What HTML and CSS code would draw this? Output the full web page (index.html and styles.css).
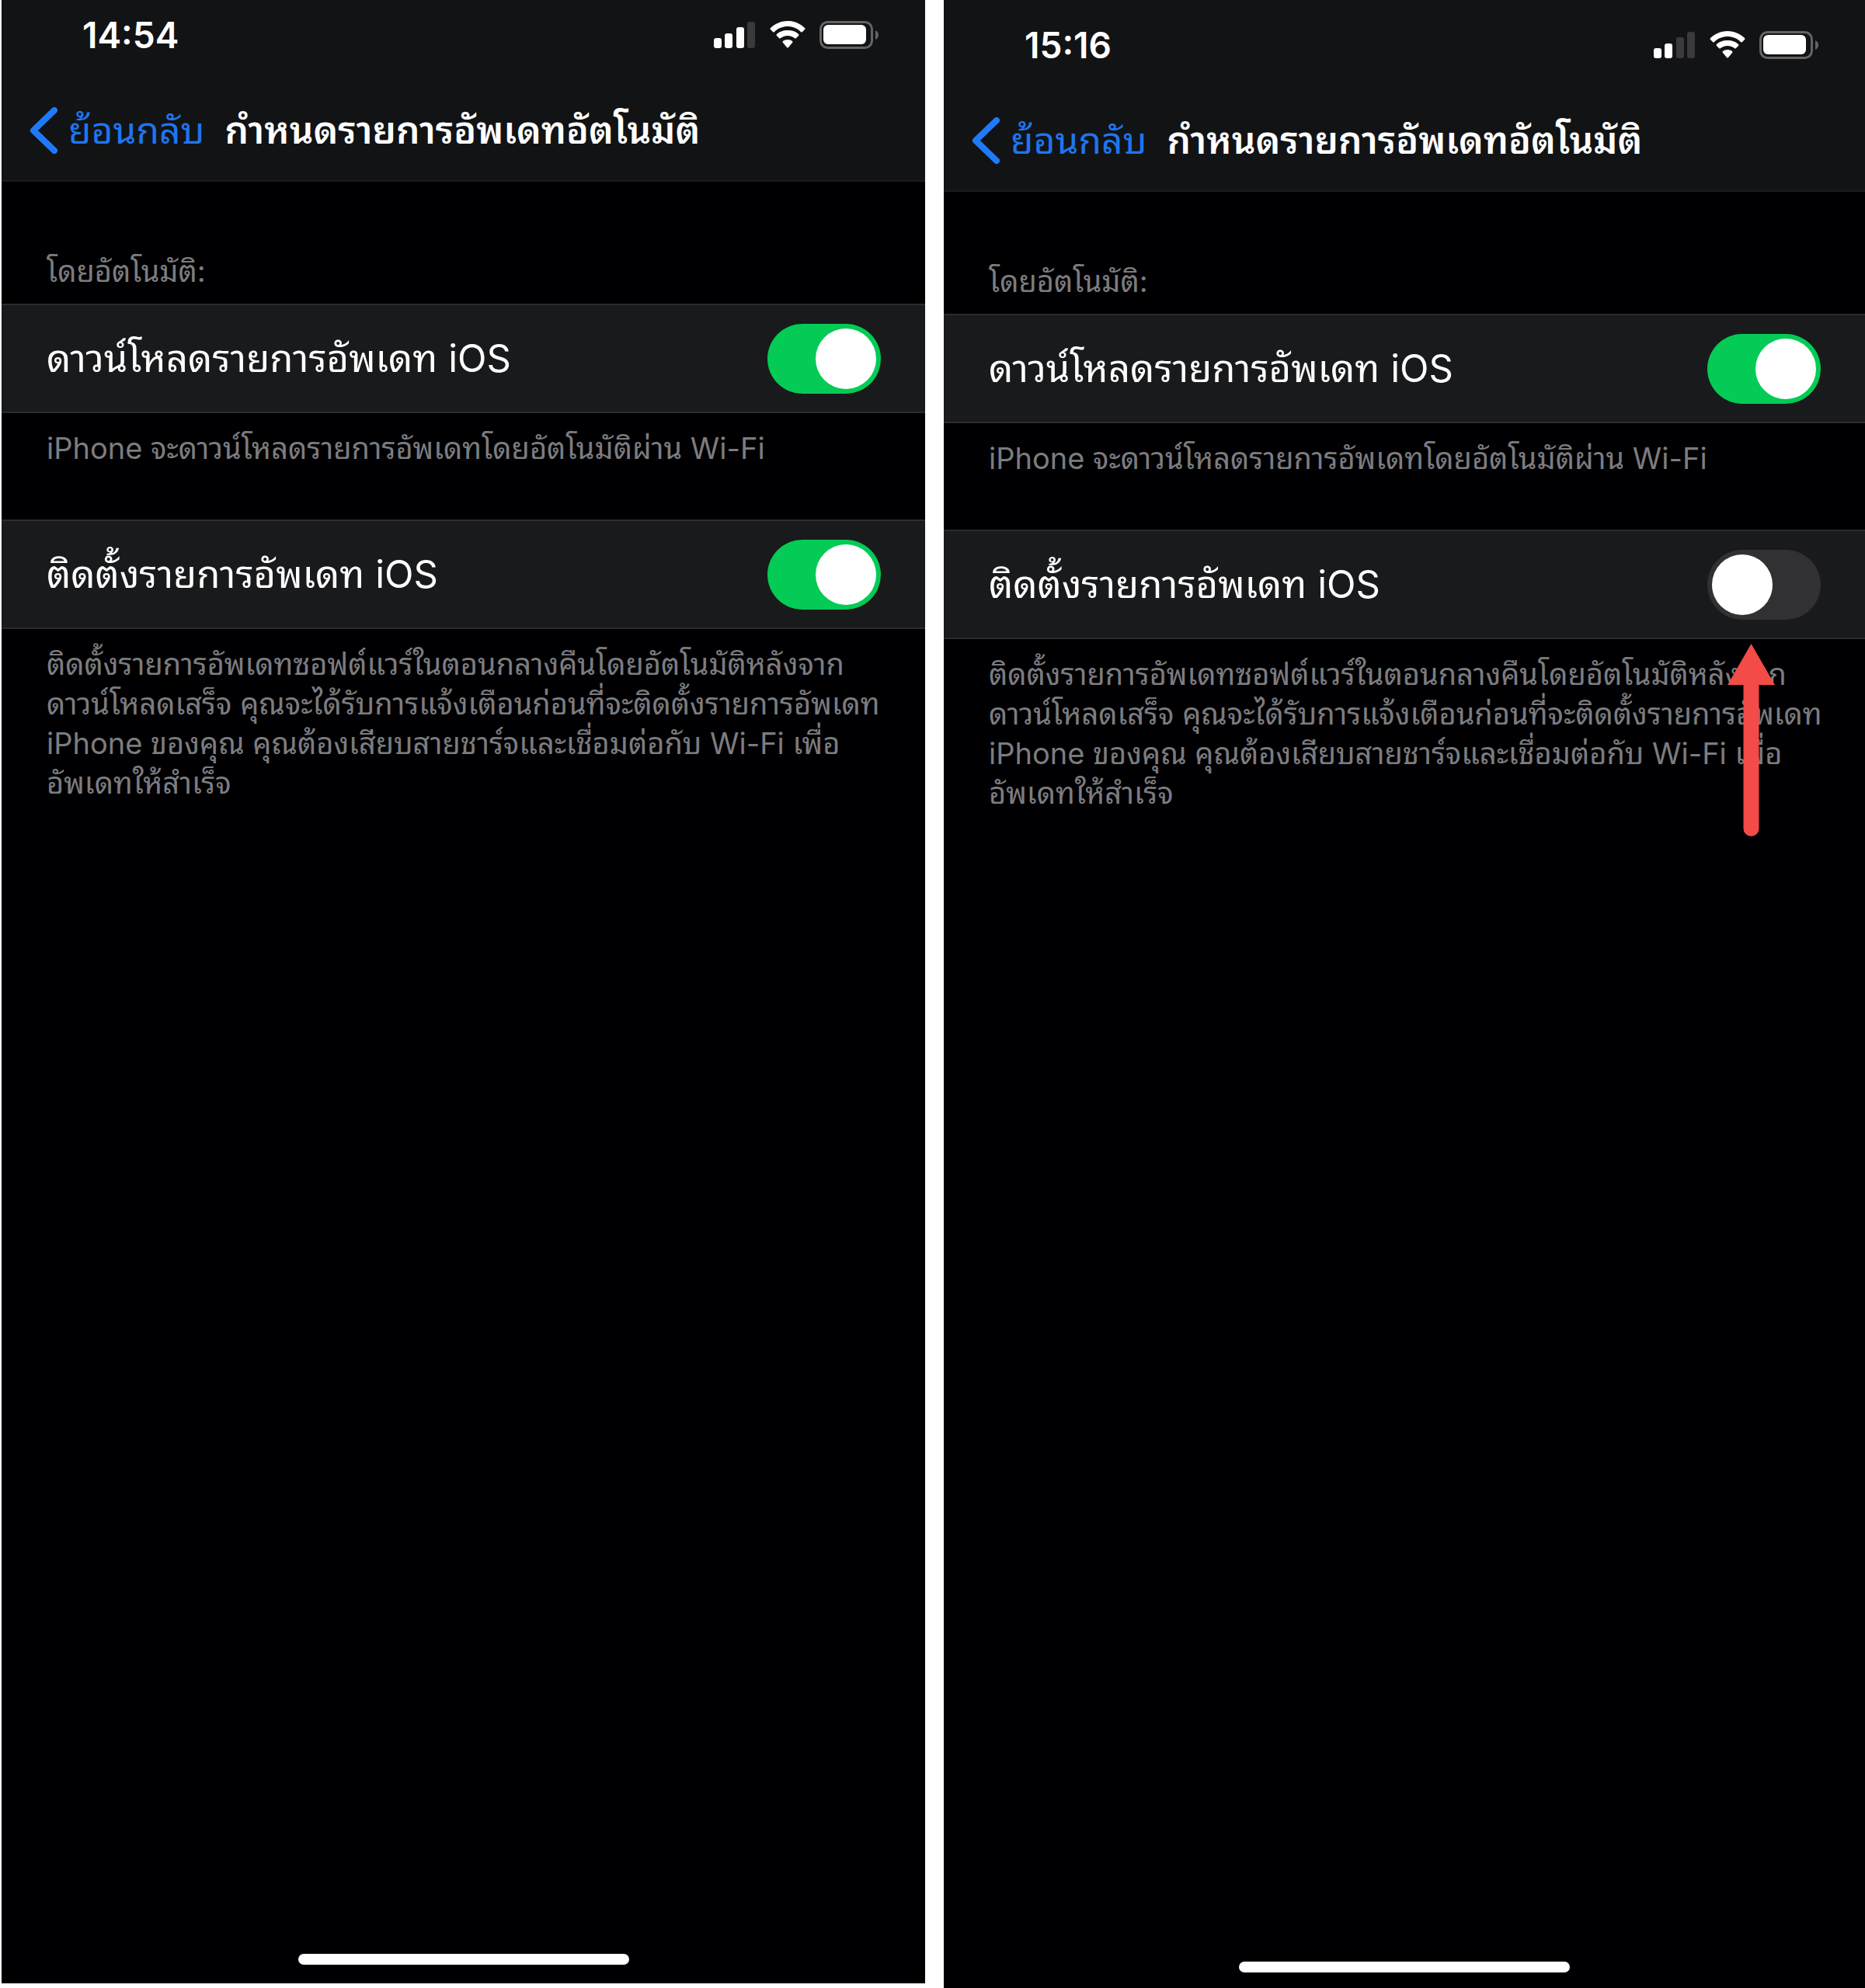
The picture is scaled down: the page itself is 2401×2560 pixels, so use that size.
FILE: index.html
```
<!DOCTYPE html>
<html lang="th">
<head>
  <meta charset="UTF-8">
  <meta name="viewport" content="width=device-width, initial-scale=1.0">
  <title>กำหนดรายการอัพเดทอัตโนมัติ</title>
  <link rel="stylesheet" href="styles.css">
</head>
<body>

  <div class="screens">

    <!-- Both options on -->
    <section class="phone phone-before">
      <header class="top-bar">
        <div class="status-bar">
          <time class="clock">14:54</time>
          <div class="status-icons">
            <svg class="signal" viewBox="0 0 54 36" aria-hidden="true">
              <rect x="0" y="22" width="10" height="13" rx="3"/>
              <rect x="14" y="16" width="10" height="19" rx="3"/>
              <rect x="29" y="8" width="10" height="27" rx="3"/>
              <rect class="dim" x="43" y="1" width="10" height="34" rx="3"/>
            </svg>
            <svg class="wifi" viewBox="0 0 46 36" aria-hidden="true">
              <path d="M23 0C14 0 6 4 1 9Q0 10 1 11L4 14Q5 15 6 14C11 9 17 7 23 7S35 9 40 14Q41 15 42 14L45 11Q46 10 45 9C40 4 32 0 23 0Z"/>
              <path d="M23 12C17 12 12 14 9 17Q8 18 9 19L12 22Q13 23 14 22C17 20 20 19 23 19S29 20 32 22Q33 23 34 22L37 19Q38 18 37 17C34 14 29 12 23 12Z"/>
              <path d="M23 24C20 24 18 25 17 26Q16 27 17 28L22 34Q23 35 24 34L29 28Q30 27 29 26C28 25 26 24 23 24Z"/>
            </svg>
            <svg class="battery" viewBox="0 0 76 36" aria-hidden="true">
              <rect class="case" x="1.5" y="1.5" width="66" height="33" rx="9"/>
              <rect x="5" y="5" width="55" height="25" rx="6"/>
              <path class="cap" d="M72 12Q76 14 76 18T72 24Z"/>
            </svg>
          </div>
        </div>
        <nav class="nav-bar">
          <a class="back" href="#">
            <svg class="chevron" viewBox="0 0 36 60" aria-hidden="true"><path d="M32 4L5 30L32 56"/></svg>
            ย้อนกลับ
          </a>
          <h1>กำหนดรายการอัพเดทอัตโนมัติ</h1>
        </nav>
      </header>

      <main class="settings">
        <h2>โดยอัตโนมัติ:</h2>
        <div class="row">
          <label for="download-1">ดาวน์โหลดรายการอัพเดท iOS</label>
          <input class="switch" type="checkbox" id="download-1" checked>
        </div>
        <p class="note">iPhone จะดาวน์โหลดรายการอัพเดทโดยอัตโนมัติผ่าน Wi-Fi</p>
        <div class="row">
          <label for="install-1">ติดตั้งรายการอัพเดท iOS</label>
          <input class="switch" type="checkbox" id="install-1" checked>
        </div>
        <p class="note">ติดตั้งรายการอัพเดทซอฟต์แวร์ในตอนกลางคืนโดยอัตโนมัติหลังจาก<br>ดาวน์โหลดเสร็จ คุณจะได้รับการแจ้งเตือนก่อนที่จะติดตั้งรายการอัพเดท<br>iPhone ของคุณ คุณต้องเสียบสายชาร์จและเชื่อมต่อกับ Wi-Fi เพื่อ<br>อัพเดทให้สำเร็จ</p>
      </main>

      <div class="home-indicator"></div>
    </section>

    <!-- Install option off -->
    <section class="phone phone-after">
      <header class="top-bar">
        <div class="status-bar">
          <time class="clock">15:16</time>
          <div class="status-icons">
            <svg class="signal" viewBox="0 0 54 36" aria-hidden="true">
              <rect x="0" y="22" width="10" height="13" rx="3"/>
              <rect x="14" y="16" width="10" height="19" rx="3"/>
              <rect class="dim" x="29" y="8" width="10" height="27" rx="3"/>
              <rect class="dim" x="43" y="1" width="10" height="34" rx="3"/>
            </svg>
            <svg class="wifi" viewBox="0 0 46 36" aria-hidden="true">
              <path d="M23 0C14 0 6 4 1 9Q0 10 1 11L4 14Q5 15 6 14C11 9 17 7 23 7S35 9 40 14Q41 15 42 14L45 11Q46 10 45 9C40 4 32 0 23 0Z"/>
              <path d="M23 12C17 12 12 14 9 17Q8 18 9 19L12 22Q13 23 14 22C17 20 20 19 23 19S29 20 32 22Q33 23 34 22L37 19Q38 18 37 17C34 14 29 12 23 12Z"/>
              <path d="M23 24C20 24 18 25 17 26Q16 27 17 28L22 34Q23 35 24 34L29 28Q30 27 29 26C28 25 26 24 23 24Z"/>
            </svg>
            <svg class="battery" viewBox="0 0 76 36" aria-hidden="true">
              <rect class="case" x="1.5" y="1.5" width="66" height="33" rx="9"/>
              <rect x="5" y="5" width="55" height="25" rx="6"/>
              <path class="cap" d="M72 12Q76 14 76 18T72 24Z"/>
            </svg>
          </div>
        </div>
        <nav class="nav-bar">
          <a class="back" href="#">
            <svg class="chevron" viewBox="0 0 36 60" aria-hidden="true"><path d="M32 4L5 30L32 56"/></svg>
            ย้อนกลับ
          </a>
          <h1>กำหนดรายการอัพเดทอัตโนมัติ</h1>
        </nav>
      </header>

      <main class="settings">
        <h2>โดยอัตโนมัติ:</h2>
        <div class="row">
          <label for="download-2">ดาวน์โหลดรายการอัพเดท iOS</label>
          <input class="switch" type="checkbox" id="download-2" checked>
        </div>
        <p class="note">iPhone จะดาวน์โหลดรายการอัพเดทโดยอัตโนมัติผ่าน Wi-Fi</p>
        <div class="row">
          <label for="install-2">ติดตั้งรายการอัพเดท iOS</label>
          <input class="switch" type="checkbox" id="install-2">
          <svg class="arrow" viewBox="0 0 61 248" aria-hidden="true">
            <path d="M30.5 0L61 53H40.5V238A10 10 0 0 1 20.5 238V53H0Z"/>
          </svg>
        </div>
        <p class="note">ติดตั้งรายการอัพเดทซอฟต์แวร์ในตอนกลางคืนโดยอัตโนมัติหลังจาก<br>ดาวน์โหลดเสร็จ คุณจะได้รับการแจ้งเตือนก่อนที่จะติดตั้งรายการอัพเดท<br>iPhone ของคุณ คุณต้องเสียบสายชาร์จและเชื่อมต่อกับ Wi-Fi เพื่อ<br>อัพเดทให้สำเร็จ</p>
      </main>

      <div class="home-indicator"></div>
    </section>

  </div>

</body>
</html>
```
FILE: styles.css
```
* {
  box-sizing: border-box;
}

body {
  margin: 0;
  background-color: #ffffff;
  color: #ffffff;
  font-family: Inter, "Noto Sans Thai Looped", "Noto Looped Thai", Loma, Waree, Garuda, "Noto Sans Thai", "Noto Sans", sans-serif;
}

.screens {
  display: grid;
  grid-template-columns: 1189fr 1186fr;
  gap: 24px;
  min-height: 100vh;
  padding-left: 2px;
}

.phone {
  display: flex;
  flex-direction: column;
  background-color: #000002;
}

.phone-before {
  margin-bottom: 6px;
}

.top-bar {
  background-color: #121315;
  border-bottom: 2px solid #1c1d1f;
}

.phone-after .top-bar {
  padding-top: 13px;
}

.status-bar {
  display: flex;
  justify-content: space-between;
  align-items: center;
  height: 90px;
  padding: 0 60px 0 104px;
}

.clock {
  font-size: 46px;
  font-weight: 600;
}

.status-icons {
  display: flex;
  align-items: center;
  gap: 18px;
}

.status-icons svg {
  height: 36px;
  fill: #ffffff;
}

.signal {
  width: 54px;
}

.wifi {
  width: 46px;
}

.battery {
  width: 76px;
}

.signal .dim {
  fill: #3a3a3c;
}

.battery .case {
  fill: none;
  stroke: #636466;
  stroke-width: 3;
}

.battery .cap {
  fill: #636466;
}

.nav-bar {
  display: flex;
  align-items: center;
  gap: 26px;
  height: 142px;
  padding: 14px 36px 0;
}

.back {
  display: flex;
  align-items: center;
  gap: 14px;
  color: #1f75ee;
  font-size: 48px;
  line-height: 60px;
  text-decoration: none;
  white-space: nowrap;
}

.chevron {
  width: 36px;
  height: 60px;
  fill: none;
  stroke: #1f7afa;
  stroke-width: 8;
  stroke-linecap: round;
  stroke-linejoin: round;
}

h1 {
  margin: 0;
  font-size: 48px;
  font-weight: 600;
  line-height: 60px;
  white-space: nowrap;
}

h2 {
  margin: 0;
  padding: 90px 58px 16px;
  color: #7c7c80;
  font-size: 38px;
  font-weight: 400;
  line-height: 51px;
}

.row {
  position: relative;
  display: flex;
  justify-content: space-between;
  align-items: center;
  height: 141px;
  padding: 0 57px 0 58px;
  background-color: #191a1c;
  border-top: 2px solid #2a2b2d;
  border-bottom: 2px solid #2a2b2d;
}

.row label {
  font-size: 49px;
  line-height: 60px;
}

.switch {
  appearance: none;
  width: 146px;
  height: 90px;
  margin: 0;
  padding: 6px;
  border-radius: 45px;
  background-color: #313134;
  cursor: pointer;
}

.switch::before {
  content: "";
  display: block;
  width: 78px;
  height: 78px;
  border-radius: 50%;
  background-color: #ffffff;
}

.switch:checked {
  background-color: #04cb55;
}

.switch:checked::before {
  margin-left: auto;
}

.note {
  margin: 0;
  padding: 20px 40px 66px 58px;
  color: #7c7c80;
  font-size: 38px;
  line-height: 51px;
  white-space: nowrap;
}

/* Points at the switch that was turned off */
.arrow {
  position: absolute;
  top: 145px;
  right: 116px;
  width: 61px;
  height: 248px;
  fill: #f24b48;
}

.home-indicator {
  width: 426px;
  height: 14px;
  margin: auto auto 24px;
  border-radius: 7px;
  background-color: #ffffff;
}

.phone-after .home-indicator {
  margin-bottom: 20px;
}
```
